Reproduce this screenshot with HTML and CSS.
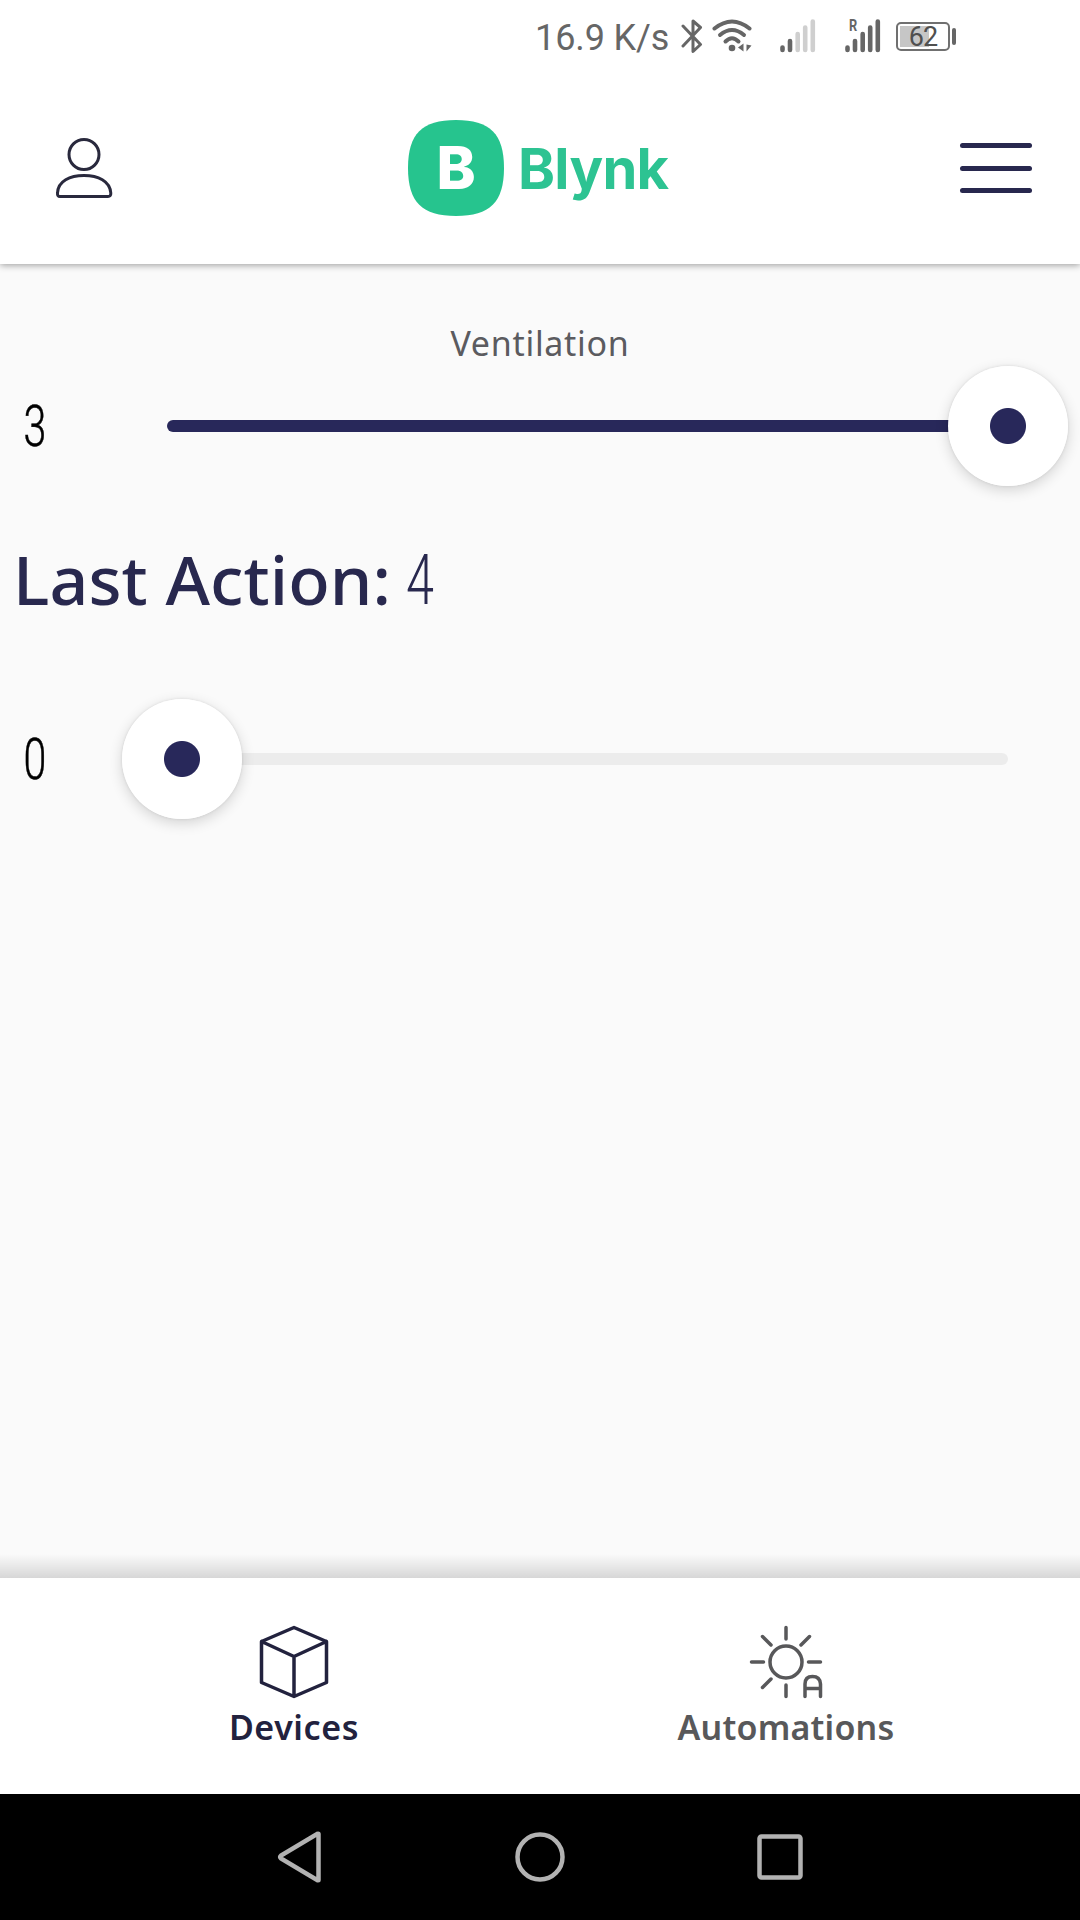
FILE: index.html
```html
<!DOCTYPE html>
<html lang="en">
<head>
<meta charset="utf-8">
<title>Blynk</title>
<link rel="stylesheet" href="styles.css">
</head>
<body>
<div class="app">
  <div class="status">
    <span class="speed">16.9 K/s</span>
    <svg class="bluetooth" width="22" height="36" viewBox="681 18 22 36"><path d="M683 26L700.5 44.500L693 51.500V21L700.500 27.500L683 46"/></svg>
    <svg class="wifi" width="40" height="36" viewBox="712 18 40 36"><g class="arc"><path d="M714.500 28.500Q732 14.500 749.500 28.500"/><path d="M720 35Q732 25 744 35"/><path d="M725.500 41.500Q732 35 738.500 41.500"/></g><circle cx="732" cy="48" r="3.300"/><path d="M743.500 43.500V51.500L738 47.500ZM746.500 44.500L751.500 45.500L746.500 51.500Z"/></svg>
    <svg class="signal" width="36" height="36" viewBox="780 18 36 36"><path d="M782.500 47.500V50M790 41V50"/><path class="weak" d="M797.700 34V50M805.200 27.500V50M812.800 21.500V50"/></svg>
    <span class="roaming"><svg class="signal" width="36" height="36" viewBox="845 18 36 36"><path d="M847.500 47.500V50M855 41V50M862.700 34V50M870.200 27.500V50M877.800 21.500V50"/></svg><b>R</b></span>
    <span class="battery"><span class="level">62</span></span>
  </div>

  <header class="header">
    <svg class="person" width="60" height="64" viewBox="54 136 60 64"><circle cx="84" cy="154.500" r="15"/><path d="M57.500 193C58 181 70 175.500 84 175.500S110 181 110.800 193Q111 196.500 108 196.500H60Q57.200 196.500 57.500 193Z"/></svg>
    <div class="brand">
      <div class="mark"><svg width="96" height="96" viewBox="0 0 96 96"><path d="M48 0C82 0 96 14 96 48S82 96 48 96 0 82 0 48 14 0 48 0Z"/></svg><span>B</span></div>
      <span class="name">Blynk</span>
    </div>
    <div class="menu"><i></i><i></i><i></i></div>
  </header>

  <main class="content">
    <div class="title">Ventilation</div>
    <div class="row">
      <span class="value">3</span>
      <div class="slider full"><div class="knob"></div></div>
    </div>
    <div class="action"><span class="label">Last Action:</span><span class="code">4</span></div>
    <div class="row">
      <span class="value">0</span>
      <div class="slider"><div class="knob"></div></div>
    </div>
  </main>

  <nav class="tabs">
    <div class="tab active">
      <svg width="72" height="76" viewBox="258 1624 72 76"><path d="M294 1627.500L326.500 1641.500V1682.500L294 1696.500L261.500 1682.500V1641.500ZM261.500 1641.500L294 1656.500L326.500 1641.500M294 1656.500V1696.500"/></svg>
      <span>Devices</span>
    </div>
    <div class="tab auto">
      <svg width="76" height="76" viewBox="748 1624 76 76"><circle cx="786" cy="1662" r="16"/><path d="M786 1627.500V1639M786 1685V1696.500M751.500 1662H763.500M808.500 1662H820.500M762.500 1636.500L771 1645M809.500 1636.500L801 1645M762.500 1687.500L771 1679M805 1696.500V1684Q805 1676.500 812.500 1676.500T820.500 1684V1696.500M805 1688.500H820.500"/></svg>
      <span>Automations</span>
    </div>
  </nav>

  <div class="system">
    <svg width="46" height="58" viewBox="277 1828 46 58"><path d="M318.500 1834V1880Q318.500 1880.500 317 1880L281 1858.500Q279.500 1857 281 1855.500L317 1834Q318.500 1833.500 318.500 1834Z"/></svg>
    <svg width="54" height="54" viewBox="0 0 54 54"><circle cx="27" cy="27" r="22.500"/></svg>
    <svg width="48" height="48" viewBox="0 0 48 48"><rect x="3.500" y="3.500" width="41" height="41" rx="2"/></svg>
  </div>
</div>
</body>
</html>
```
FILE: styles.css
```css
* { box-sizing: border-box; }
body { margin: 0; background: #fff; }
svg { display: block; flex: none; fill: none; }
.app {
  width: 1080px;
  height: 1920px;
  display: flex;
  flex-direction: column;
  overflow: hidden;
  font-family: "Noto Sans", sans-serif;
}

.status {
  height: 72px;
  display: flex;
  align-items: center;
  padding-left: 535px;
  font-family: Roboto, sans-serif;
  color: #666;
}
.speed { width: 146px; font-size: 36px; line-height: 72px; letter-spacing: -0.1px; padding-top: 3px; white-space: nowrap; }
.bluetooth { stroke: #666; stroke-width: 3; stroke-linejoin: round; stroke-linecap: round; }
.wifi { margin-left: 9px; fill: #666; }
.arc { fill: none; stroke: #666; stroke-width: 4; stroke-linecap: round; }
.signal { stroke: #666; stroke-width: 4.600; stroke-linecap: round; }
.weak { stroke: #cfcfcf; }
.wifi + .signal { margin: 0 29px 0 28px; }
.roaming { position: relative; }
.roaming b { position: absolute; left: 4px; top: 0; font-size: 16px; line-height: 16px; transform: scaleX(0.8); transform-origin: left; }
.battery { display: flex; align-items: center; margin-left: 15px; }
.battery::after { content: ""; width: 4px; height: 17px; margin-left: 2px; border-radius: 3px; background: #666; }
.level {
  width: 54px;
  height: 29px;
  border: 2px solid #707070;
  border-radius: 5px;
  background: linear-gradient(#c6c6c6, #c6c6c6) 2px 2px / 29px 21px no-repeat;
  color: #505050;
  font-size: 27px;
  line-height: 27px;
  letter-spacing: -0.800px;
  text-align: center;
}

.header {
  height: 192px;
  flex: none;
  display: flex;
  align-items: center;
  justify-content: space-between;
  padding: 0 48px 0 54px;
  background: #fff;
  box-shadow: 0 1px 7px rgba(0, 0, 0, 0.4);
  clip-path: inset(0 0 -12px 0);
  z-index: 1;
}
.person { stroke: #29293d; stroke-width: 3; }
.brand { display: flex; align-items: center; width: 264px; margin-left: 6px; font-family: Inter, sans-serif; font-weight: 700; }
.mark { display: grid; place-items: center; margin-right: 14px; }
.mark svg { fill: #26c48e; grid-area: 1 / 1; }
.mark span { grid-area: 1 / 1; color: #fff; font-size: 59px; font-weight: 800; line-height: 96px; }
.name { color: #2dc392; font-size: 56px; line-height: 96px; letter-spacing: -0.700px; padding-top: 2px; }
.menu { display: grid; gap: 17.500px; width: 72px; }
.menu i { height: 5px; border-radius: 3px; background: #28284e; }

.content {
  flex: 1;
  background: linear-gradient(rgba(0, 0, 0, 0), rgba(0, 0, 0, 0.14)) bottom / 100% 24px no-repeat #fafafa;
}
.title { padding-top: 56px; font-size: 34px; line-height: 46px; letter-spacing: 0.700px; text-align: center; color: #5b5b5f; }
.row { display: flex; align-items: center; height: 120px; padding: 0 72px 0 20px; }
.value { width: 147px; font-family: Roboto, sans-serif; font-weight: 300; font-size: 57px; line-height: 120px; color: #000; -webkit-text-stroke: 0.500px #000; transform: scaleX(0.72); transform-origin: left; padding: 2px 0 0 5px; }
.slider { display: flex; align-items: center; flex: 1; height: 12px; border-radius: 6px; background: #ececec; }
.full { background: #28285a; justify-content: flex-end; }
.knob {
  width: 120px;
  height: 120px;
  flex: none;
  margin: 0 -60px 0 -45px;
  border-radius: 50%;
  background: radial-gradient(circle, #28285a 17.500px, #fff 18.500px);
  box-shadow: 0 4px 14px rgba(0, 0, 0, 0.16), 0 0 3px rgba(0, 0, 0, 0.1);
}
.action { display: flex; height: 213px; padding: 0 0 0 13px; color: #28284e; font-size: 68px; line-height: 185px; }
.label { width: 393px; font-weight: 500; letter-spacing: 0.100px; white-space: nowrap; }
.code { font-family: Roboto, sans-serif; font-weight: 300; font-size: 70px; line-height: 188px; transform: scaleX(0.72); transform-origin: left; }

.tabs { height: 216px; flex: none; display: flex; padding: 46px 49px 0; background: #fff; }
.tab { flex: 1; display: flex; flex-direction: column; align-items: center; font-size: 34px; line-height: 46px; font-weight: 600; letter-spacing: 0.200px; color: #58585a; }
.tab svg { stroke: currentColor; stroke-width: 3.500; stroke-linejoin: round; stroke-linecap: round; }
.tab span { margin-top: 4px; }
.active { color: #22223e; padding-right: 2px; }
.active span { letter-spacing: 0.600px; }

.system { height: 126px; flex: none; display: flex; align-items: center; justify-content: space-between; padding: 0 276px 0 277px; background: #000; }
.system svg { stroke: #b2b2b2; stroke-width: 4.500; }
```
